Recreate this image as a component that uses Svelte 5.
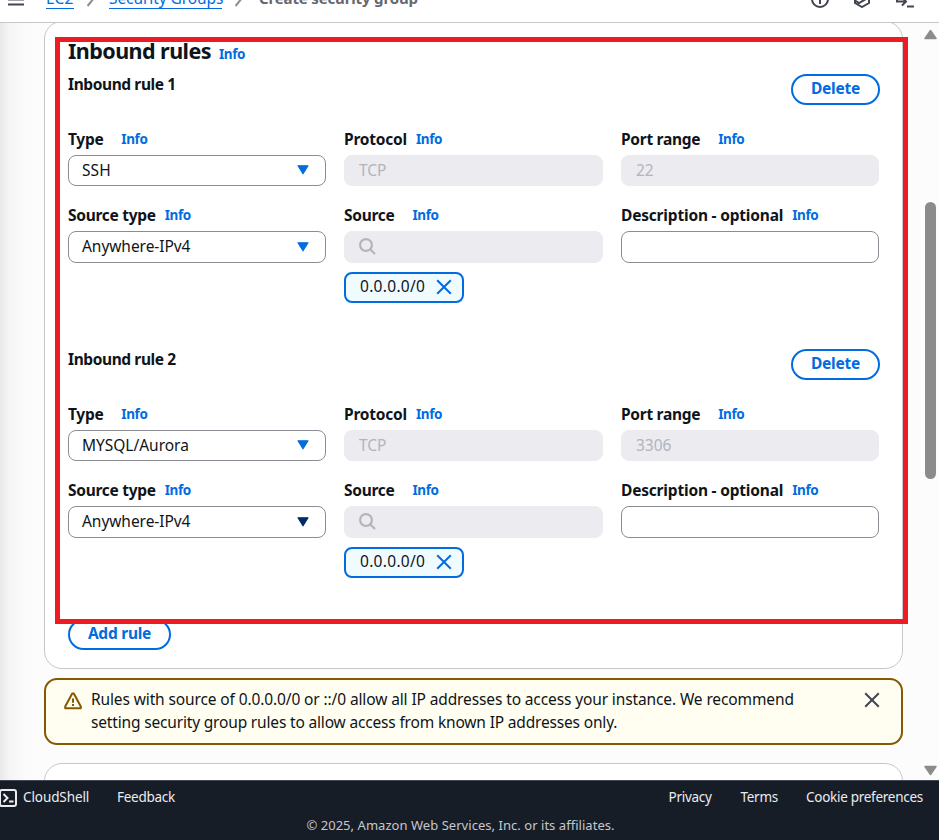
<script>
  const rules = [
    { n: 1, type: 'SSH', typeSpacing: 0.1, port: '22', dark: false },
    { n: 2, type: 'MYSQL/Aurora', typeSpacing: -0.02, port: '3306', dark: true }
  ];
</script>

{#snippet label(text, gap, spacing)}
  <div class="label">
    <span class="b" style:letter-spacing="{spacing}px">{text}</span>
    <a class="info" style:margin-left="{gap}px">Info</a>
  </div>
{/snippet}

{#snippet select(text, spacing, dark)}
  <div class="input select">
    <span style:letter-spacing="{spacing}px">{text}</span>
    <svg width="12" height="10" viewBox="0 0 12 10"><path d="M1 .8h10L6 8.8z" fill={dark ? '#002b66' : '#006ce0'} stroke={dark ? '#002b66' : '#006ce0'} stroke-width="1.2" stroke-linejoin="round" /></svg>
  </div>
{/snippet}

<div class="page">
  <header>
    <div class="crumbs">
      <svg class="menu" width="16" height="18" viewBox="0 0 16 18"><path d="M0 5h16M0 11.5h16M0 16.5h16" stroke="#424650" stroke-width="2" /></svg>
      <span class="link c1">EC2</span>
      <svg class="s1" width="10" height="15" viewBox="0 0 10 15"><path d="m9.500 3-9 11" stroke="#8c8c94" stroke-width="2" /></svg>
      <span class="link c2">Security Groups</span>
      <svg class="s2" width="10" height="15" viewBox="0 0 10 15"><path d="m9.500 3-9 11" stroke="#8c8c94" stroke-width="2" /></svg>
      <span class="current">Create security group</span>
    </div>
    <div class="tools">
      <svg width="18" height="18" viewBox="0 0 18 18" fill="none" stroke="#424650" stroke-width="2"><circle cx="9" cy="9" r="8" /><path d="M9 8v6M9 4v2" /></svg>
      <svg width="18" height="18" viewBox="0 0 18 18" fill="none" stroke="#424650" stroke-width="2"><path d="m9 1 7 4v8l-7 4-7-4v-2.500l4 2.500 7-4M2 5l7 4" /></svg>
      <svg width="19" height="18" viewBox="0 0 19 18" fill="none" stroke="#424650" stroke-width="2"><path d="M2 2v9.500h8M7 7.500l4 4-4 4M12 16.500h7" /></svg>
    </div>
  </header>

  <main>
    <section class="card">
      <div class="title"><h2>Inbound rules</h2><a class="info">Info</a></div>
      {#each rules as r}
        <div class="rule">
          <div class="head">
            <span class="b">Inbound rule {r.n}</span>
            <button class="del">Delete</button>
          </div>
          <div class="grid">
            <div>
              {@render label('Type', 18, -0.3)}
              {@render select(r.type, r.typeSpacing, false)}
            </div>
            <div>
              {@render label('Protocol', 9, -0.22)}
              <div class="input off">TCP</div>
            </div>
            <div>
              {@render label('Port range', 18, -0.28)}
              <div class="input off">{r.port}</div>
            </div>
          </div>
          <div class="grid second">
            <div>
              {@render label('Source type', 9, -0.28)}
              {@render select('Anywhere-IPv4', -0.05, r.dark)}
            </div>
            <div>
              {@render label('Source', 18, -0.28)}
              <div class="input off">
                <svg width="17" height="17" viewBox="0 0 17 17" fill="none" stroke="#b4b4bb" stroke-width="2.2"><circle cx="7" cy="7" r="5.9" /><path d="m11 11 5 5" /></svg>
              </div>
              <div class="token">
                <span>0.0.0.0/0</span>
                <svg width="16" height="16" viewBox="0 0 16 16"><path d="m1.200 1.200 13.600 13.600m0-13.600L1.200 14.800" stroke="#006ce0" stroke-width="2" /></svg>
              </div>
            </div>
            <div>
              {@render label('Description - optional', 9, -0.19)}
              <div class="input"></div>
            </div>
          </div>
        </div>
      {/each}
      <button class="add">Add rule</button>
      <div class="mark"></div>
    </section>

    <section class="alert">
      <svg width="18" height="18" viewBox="0 0 18 18" fill="none" stroke="#855900" stroke-width="2" stroke-linejoin="round"><path d="M8.200 1.500h1.600l7 13v1.800H1.200v-1.800zM9 6.500v4.200M9 12v2" /></svg>
      <p><span class="l1">Rules with source of 0.0.0.0/0 or ::/0 allow all IP addresses to access your instance. We recommend</span><br /><span class="l2">setting security group rules to allow access from known IP addresses only.</span></p>
      <svg class="close" width="16" height="16" viewBox="0 0 16 16"><path d="m1.200 1.200 13.600 13.600m0-13.600L1.200 14.800" stroke="#424650" stroke-width="2" /></svg>
    </section>
    <section class="next"></section>

    <div class="scroll">
      <svg width="13" height="11" viewBox="0 0 13 11"><path d="M6.500 1.500 12 9.500H1z" fill="#8b8b8b" stroke="#8b8b8b" stroke-width="1.500" stroke-linejoin="round" /></svg>
      <div class="thumb"></div>
      <svg width="13" height="11" viewBox="0 0 13 11"><path d="M6.500 9.500 12 1.500H1z" fill="#8b8b8b" stroke="#8b8b8b" stroke-width="1.500" stroke-linejoin="round" /></svg>
    </div>
  </main>

  <footer>
    <div class="links">
      <svg width="18" height="18" viewBox="0 0 18 18" fill="none" stroke="#ebebf0" stroke-width="2"><rect x="0" y="1" width="16" height="16" rx="2" /><path d="m3.500 5 4 4-4 4M9 12.500h4.500" /></svg>
      <span class="f1">CloudShell</span>
      <span class="f2">Feedback</span>
      <span class="f3">Privacy</span>
      <span class="f4">Terms</span>
      <span class="f5">Cookie preferences</span>
    </div>
    <div class="copy"><span>© 2025, Amazon Web Services, Inc. or its affiliates.</span></div>
  </footer>
</div>

<style>
  .page { width: 939px; height: 840px; overflow: hidden; display: flex; flex-direction: column; background: #fcfcfd; color: #0f141a; font: 15.5px/22px "Noto Sans", "Open Sans", sans-serif; }
  .page * { box-sizing: border-box; }
  svg { display: block; flex: none; }
  span { white-space: nowrap; }
  header { height: 23px; flex: none; border-bottom: 1px solid #c6c6cd; background: #fff; display: flex; justify-content: space-between; overflow: hidden; }
  .crumbs { display: flex; margin-top: -12px; padding-left: 8px; height: 22px; }
  .menu { margin: 0 22px 0 0; }
  .link { color: #006ce0; border-bottom: 1px solid #006ce0; height: 21px; line-height: 20px; }
  .c1 { width: 28px; }
  .s1 { margin: 4px 12px 0 13px; }
  .c2 { width: 113px; letter-spacing: -.08px; }
  .s2 { margin: 4px 14px 0 13px; }
  .current { color: #656871; font-weight: 700; font-size: 15px; line-height: 21px; letter-spacing: -.15px; }
  .tools { display: flex; gap: 24px; margin-top: -10px; padding-right: 25px; }
  main { position: relative; height: 757px; flex: none; overflow: hidden; padding-left: 44px; background: linear-gradient(90deg, #e9e9ea 0, #f5f5f6 9px, #fafafb 24px, #fcfcfd 40px); }
  .card { position: relative; width: 859px; height: 648px; margin-top: -2px; background: #fff; border: 1px solid #c6c6cd; border-radius: 18px; padding: 18px 23px 0; display: flex; flex-direction: column; align-items: flex-start; }
  .title { display: flex; align-items: center; height: 24px; margin-bottom: 10px; }
  h2 { margin: -2px 8px 0 0; font-size: 21.5px; line-height: 24px; width: 143px; white-space: nowrap; letter-spacing: -.55px; }
  .title .info { padding-top: 4px; }
  .info { color: #006ce0; font-size: 13.5px; font-weight: 700; letter-spacing: -.4px; }
  .b { font-weight: 700; }
  .rule { width: 811px; height: 275px; }
  .head { display: flex; justify-content: space-between; height: 31px; margin-bottom: 23px; margin-right: -1px; }
  .head .b { line-height: 21px; letter-spacing: -.4px; }
  button { height: 31px; border: 2px solid #006ce0; border-radius: 16px; background: #fff; color: #006ce0; padding: 0 0 3px; font: 700 15.5px/20px "Noto Sans", "Open Sans", sans-serif; letter-spacing: -.25px; }
  .del { width: 89px; }
  .add { width: 103px; margin-top: -5px; flex: none; }
  .grid { display: grid; grid-template-columns: 258px 259px 258px; column-gap: 18px; margin-right: -1px; }
  .second { margin-top: 18px; }
  .label { display: flex; align-items: center; height: 22px; margin-bottom: 5px; }
  .input { height: 31px; border: 1px solid #8c8c94; border-radius: 8px; background: #fff; padding: 0 16px 1px 13px; display: flex; align-items: center; }
  .second .input { height: 32px; }
  .select { justify-content: space-between; }
  .select span { margin-top: -1px; }
  .off { background: #ebebf0; border-color: #ebebf0; color: #b4b4bb; padding-left: 14px; }
  .token { margin-top: 9px; width: 120px; height: 31px; border: 2px solid #006ce0; border-radius: 8px; background: #f0fbff; display: flex; align-items: center; justify-content: space-between; padding: 0 10px 1px 14px; letter-spacing: .3px; }
  .token span { margin-top: -2px; }
  .mark { position: absolute; left: 10px; top: 15px; width: 853px; height: 587px; border: 5px solid #ed1c24; pointer-events: none; }
  .alert { width: 859px; height: 67px; margin-top: 9px; border: 2px solid #855900; border-radius: 13px; background: #fffef0; display: flex; padding: 8px 21px 0 18px; }
  .alert svg { margin-top: 4px; }
  .alert p { margin: 0 0 0 9px; line-height: 23px; flex: 1; }
  .l1 { letter-spacing: -.12px; }
  .l2 { letter-spacing: -.17px; }
  .next { width: 859px; height: 60px; margin-top: 18px; background: #fff; border: 1px solid #c6c6cd; border-radius: 18px; }
  .scroll { position: absolute; right: 2px; top: 6px; height: 747px; display: flex; flex-direction: column; align-items: center; }
  .thumb { width: 11px; height: 277px; border-radius: 6px; background: #8b8b8b; margin: 162px 0 auto; }
  footer { height: 60px; flex: none; background: #161d26; border-top: 1px solid #424650; color: #ebebf0; font-size: 13.5px; }
  .links { display: flex; height: 33px; align-items: center; }
  .links span { flex: none; letter-spacing: -.28px; margin-top: -2px; }
  .links .f1 { width: 66px; margin-left: 5px; letter-spacing: -.1px; }
  .f2 { width: 58px; margin-left: 28px; }
  .f3 { width: 45px; margin-left: 493.5px; }
  .f4 { width: 38px; margin-left: 27px; }
  .f5 { margin-left: 27.5px; }
  .copy { text-align: center; padding-right: 18px; line-height: 22px; font-size: 13px; color: #c6c6cd; letter-spacing: .04px; }
</style>
